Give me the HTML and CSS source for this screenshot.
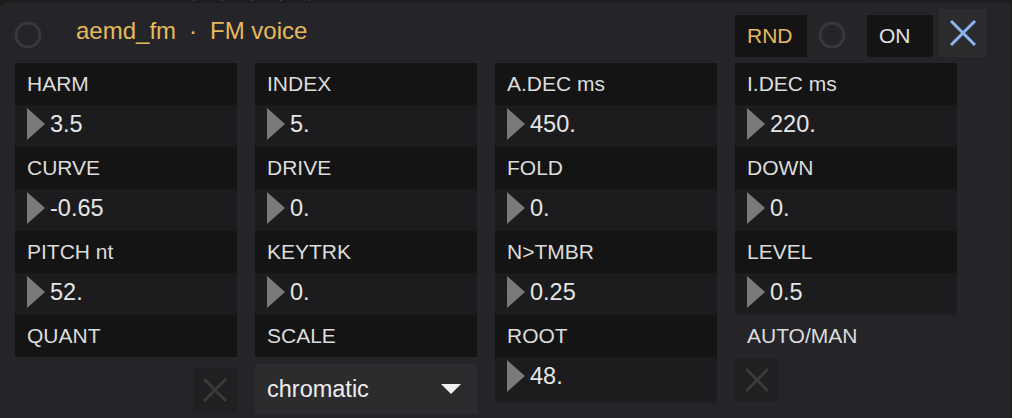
FILE: index.html
```html
<!DOCTYPE html>
<html lang="en">
<head>
  <meta charset="UTF-8" />
  <title>aemd_fm</title>
  <link rel="stylesheet" href="styles.css">
</head>
<body>
  <div class="strip"><div class="ticks"></div></div>

  <div class="panel">
    <div class="header">
      <svg class="led" width="28" height="28" viewBox="0 0 28 28"><circle cx="14" cy="14" r="12" fill="none" stroke="#38383a" stroke-width="3"/></svg>
      <div class="title">aemd_fm<span class="dot">·</span>FM voice</div>
      <div class="btn rnd">RND</div>
      <svg class="led led-r" width="28" height="28" viewBox="0 0 28 28"><circle cx="14" cy="14" r="12" fill="none" stroke="#38383a" stroke-width="3"/></svg>
      <div class="btn on">ON</div>
      <div class="close">
        <svg width="26" height="26" viewBox="0 0 26 26"><path d="M1 1 L25 25 M25 1 L1 25" stroke="#8db4ee" stroke-width="3"/></svg>
      </div>
    </div>

    <div class="columns">
      <div class="col">
        <div class="label">HARM</div>
        <div class="num">3.5</div>
        <div class="label">CURVE</div>
        <div class="num">-0.65</div>
        <div class="label">PITCH nt</div>
        <div class="num">52.</div>
        <div class="label">QUANT</div>
        <div class="toggle right">
          <svg width="24" height="24" viewBox="0 0 24 24"><path d="M1 1 L23 23 M23 1 L1 23" stroke="#3a3a3b" stroke-width="3"/></svg>
        </div>
      </div>

      <div class="col">
        <div class="label">INDEX</div>
        <div class="num">5.</div>
        <div class="label">DRIVE</div>
        <div class="num">0.</div>
        <div class="label">KEYTRK</div>
        <div class="num">0.</div>
        <div class="label">SCALE</div>
        <div class="menu">
          <span>chromatic</span>
          <svg width="20" height="10" viewBox="0 0 20 10"><path d="M0 0 L20 0 L10 10 Z" fill="#f0f0f0"/></svg>
        </div>
      </div>

      <div class="col">
        <div class="label">A.DEC ms</div>
        <div class="num">450.</div>
        <div class="label">FOLD</div>
        <div class="num">0.</div>
        <div class="label">N&gt;TMBR</div>
        <div class="num">0.25</div>
        <div class="label">ROOT</div>
        <div class="num tall">48.</div>
      </div>

      <div class="col">
        <div class="label">I.DEC ms</div>
        <div class="num">220.</div>
        <div class="label">DOWN</div>
        <div class="num">0.</div>
        <div class="label">LEVEL</div>
        <div class="num">0.5</div>
        <div class="label plain">AUTO/MAN</div>
        <div class="toggle left">
          <svg width="24" height="24" viewBox="0 0 24 24"><path d="M1 1 L23 23 M23 1 L1 23" stroke="#3a3a3b" stroke-width="3"/></svg>
        </div>
      </div>
    </div>
  </div>
</body>
</html>
```

FILE: styles.css
```css
body {
  margin: 0;
  background-color: #1d1d1e;
  font-family: "Liberation Sans", Arial, sans-serif;
  overflow: hidden;
}
.strip {
  height: 3px;
}
.ticks {
  margin-left: 193px;
  width: 120px;
  height: 1px;
  background: repeating-linear-gradient(to right, #4a4a4a 0 1px, transparent 1px 29px);
}
.panel {
  width: 1011px;
  height: 415px;
  background-color: #252529;
  border-radius: 6px 6px 0 0;
}
.header {
  display: flex;
  align-items: flex-start;
  height: 60px;
  padding: 12px 24px 0 14px;
  box-sizing: border-box;
}
.led {
  margin-top: 6px;
}
.led-r {
  margin-left: 11px;
}
.title {
  margin: 3px 0 0 34px;
  color: #e5b95c;
  font-size: 24px;
  line-height: 26px;
}
.dot {
  margin: 0 13px;
}
.btn {
  height: 42px;
  line-height: 42px;
  background-color: #141414;
  font-size: 21px;
  padding-left: 12px;
  box-sizing: border-box;
}
.rnd {
  margin-left: auto;
  width: 72px;
  color: #e5b95c;
}
.on {
  margin-left: 21px;
  width: 66px;
  color: #e2e2e2;
}
.close {
  margin: -6px 0 0 6px;
  width: 48px;
  height: 48px;
  background-color: #2c2c2f;
  display: flex;
  align-items: center;
  justify-content: center;
}
.columns {
  display: flex;
  align-items: flex-start;
  gap: 18px;
  padding-left: 15px;
}
.col {
  width: 222px;
  display: flex;
  flex-direction: column;
}
.label {
  height: 42px;
  display: flex;
  align-items: center;
  padding-left: 12px;
  background-color: #141414;
  color: #dcdcdc;
  font-size: 21px;
}
.label.plain {
  background: none;
}
.num {
  height: 42px;
  display: flex;
  align-items: flex-start;
  padding: 3px 0 0 12px;
  box-sizing: border-box;
  background-color: #1c1c1e;
  color: #e6e6e6;
  font-size: 23.5px;
  line-height: 33px;
}
.num::before {
  content: "";
  border-left: 18px solid #7a7a7a;
  border-top: 16.5px solid transparent;
  border-bottom: 16.5px solid transparent;
  margin-right: 5px;
}
.num.tall {
  height: 46px;
}
.toggle {
  width: 44px;
  height: 44px;
  margin-top: 11px;
  background-color: #202022;
  display: flex;
  align-items: center;
  justify-content: center;
}
.toggle.right {
  align-self: flex-end;
}
.toggle.left {
  margin-top: 1px;
}
.menu {
  height: 50px;
  margin-top: 7px;
  display: flex;
  align-items: center;
  justify-content: space-between;
  padding: 0 16px 0 12px;
  background-color: #2c2c2e;
  color: #eeeeee;
  font-size: 23.5px;
}
```
